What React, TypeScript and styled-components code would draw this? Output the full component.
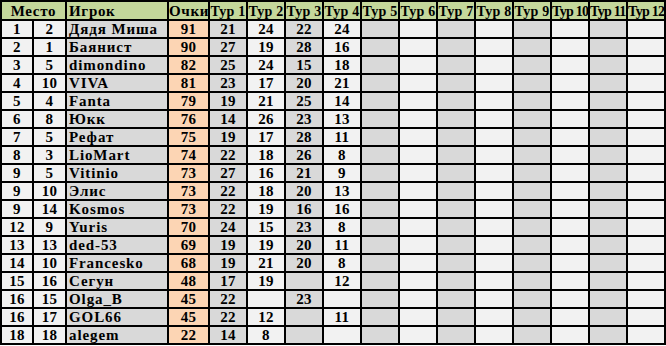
import React from 'react';
import styled, { createGlobalStyle } from 'styled-components';

const GlobalStyle = createGlobalStyle`
  html, body {
    margin: 0;
    padding: 0;
    background: #ffffff;
  }
`

interface PlayerRow {
  place: string
  prev: string
  name: string
  points: string
  tours: string[]
}

const rows: PlayerRow[] = [
  { place: '1', prev: '2', name: 'Дядя Миша', points: '91', tours: ['21', '24', '22', '24'] },
  { place: '2', prev: '1', name: 'Баянист', points: '90', tours: ['27', '19', '28', '16'] },
  { place: '3', prev: '5', name: 'dimondino', points: '82', tours: ['25', '24', '15', '18'] },
  { place: '4', prev: '10', name: 'VIVA', points: '81', tours: ['23', '17', '20', '21'] },
  { place: '5', prev: '4', name: 'Fanta', points: '79', tours: ['19', '21', '25', '14'] },
  { place: '6', prev: '8', name: 'Юкк', points: '76', tours: ['14', '26', '23', '13'] },
  { place: '7', prev: '5', name: 'Рефат', points: '75', tours: ['19', '17', '28', '11'] },
  { place: '8', prev: '3', name: 'LioMart', points: '74', tours: ['22', '18', '26', '8'] },
  { place: '9', prev: '5', name: 'Vitinio', points: '73', tours: ['27', '16', '21', '9'] },
  { place: '9', prev: '10', name: 'Элис', points: '73', tours: ['22', '18', '20', '13'] },
  { place: '9', prev: '14', name: 'Kosmos', points: '73', tours: ['22', '19', '16', '16'] },
  { place: '12', prev: '9', name: 'Yuris', points: '70', tours: ['24', '15', '23', '8'] },
  { place: '13', prev: '13', name: 'ded-53', points: '69', tours: ['19', '19', '20', '11'] },
  { place: '14', prev: '10', name: 'Francesko', points: '68', tours: ['19', '21', '20', '8'] },
  { place: '15', prev: '16', name: 'Сегун', points: '48', tours: ['17', '19', '', '12'] },
  { place: '16', prev: '15', name: 'Olga_B', points: '45', tours: ['22', '', '23', ''] },
  { place: '16', prev: '17', name: 'GOL66', points: '45', tours: ['22', '12', '', '11'] },
  { place: '18', prev: '18', name: 'alegem', points: '22', tours: ['14', '8', '', ''] },
];

const TOUR_COUNT = 12;

const Sheet = styled.div`
  display: grid;
  grid-template-columns: 30px 31px 100px 39px repeat(${TOUR_COUNT}, 36px);
  grid-template-rows: 17px repeat(${rows.length}, 16px);
  gap: 2px;
  padding: 2px;
  width: 666px;
  box-sizing: border-box;
  background: #000000;
  font-family: "Liberation Serif", "Times New Roman", serif;
  font-weight: bold;
  color: #000000;
`

const HeadCell = styled.div<{ $span?: number; $left?: boolean }>`
  grid-column: span ${({ $span }) => $span || 1};
  background: #c4d79b;
  font-size: 15px;
  letter-spacing: 0.7px;
  line-height: 17px;
  padding-top: 1px;
  height: 17px;
  box-sizing: border-box;
  text-align: ${({ $left }) => ($left ? 'left' : 'center')};
  padding-left: ${({ $left }) => ($left ? '2px' : '0')};
  white-space: nowrap;
`

// two-digit tours are squeezed to fit their column
const TourHead = styled(HeadCell)<{ $wide?: boolean }>`
  font-size: 14px;
  letter-spacing: ${({ $wide }) => ($wide ? '-0.8px' : '0.2px')};
  text-align: ${({ $wide }) => ($wide ? 'left' : 'center')};
  padding-left: 0;
`

const Cell = styled.div<{ $bg: string; $left?: boolean }>`
  background: ${({ $bg }) => $bg};
  font-size: 15px;
  letter-spacing: ${({ $left }) => ($left ? '0.9px' : '0.3px')};
  line-height: 16px;
  text-align: ${({ $left }) => ($left ? 'left' : 'center')};
  padding-left: ${({ $left }) => ($left ? '2px' : '0')};
  white-space: nowrap;
  overflow: hidden;
`

const LIGHT = '#f2f2f2';
const GRAY = '#d9d9d9';
const PEACH = '#fcd5b4';

const tourBg = (i: number) => (i % 2 === 0 ? GRAY : LIGHT);

const App: React.FC = () => {
  const tourNums = Array.from({ length: TOUR_COUNT }, (_, i) => i + 1);

  return (
    <>
      <GlobalStyle />
      <Sheet>
        <HeadCell $span={2}>Место</HeadCell>
        <HeadCell $left>Игрок</HeadCell>
        <HeadCell>Очки</HeadCell>
        {tourNums.map((n) => (
          <TourHead key={n} $wide={n >= 10}>Тур {n}</TourHead>
        ))}

        {rows.map((r, idx) => (
          <React.Fragment key={idx}>
            <Cell $bg={LIGHT}>{r.place}</Cell>
            <Cell $bg={LIGHT}>{r.prev}</Cell>
            <Cell $bg={GRAY} $left>{r.name}</Cell>
            <Cell $bg={PEACH}>{r.points}</Cell>
            {tourNums.map((n, i) => (
              <Cell key={n} $bg={tourBg(i)}>{r.tours[i] || ''}</Cell>
            ))}
          </React.Fragment>
        ))}
      </Sheet>
    </>
  )
}

export default App;
